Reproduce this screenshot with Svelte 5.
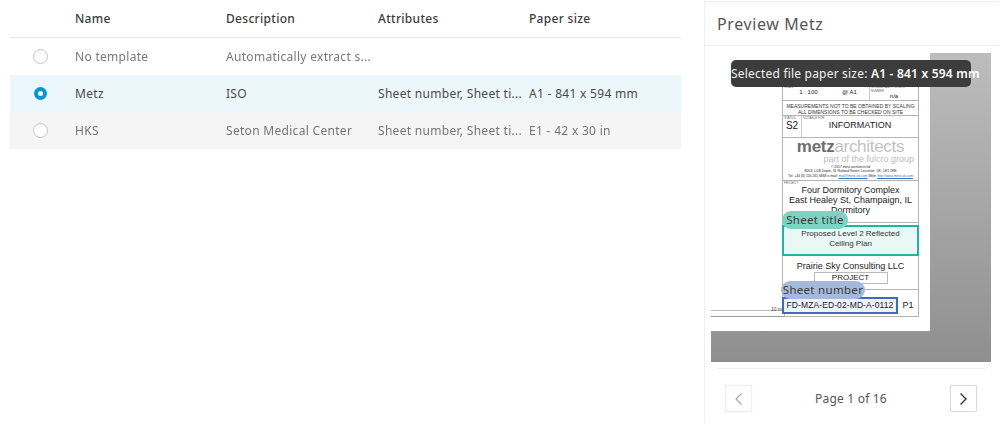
<script>
	const columns = ['Name', 'Description', 'Attributes', 'Paper size'];
	const templates = [
		{ name: 'No template', description: 'Automatically extract s...', attributes: '', paper: '', state: 'disabled' },
		{ name: 'Metz', description: 'ISO', attributes: 'Sheet number, Sheet ti...', paper: 'A1 - 841 x 594 mm', state: 'selected' },
		{ name: 'HKS', description: 'Seton Medical Center', attributes: 'Sheet number, Sheet ti...', paper: 'E1 - 42 x 30 in', state: 'disabled alt' }
	];
</script>

<div class="page">
	<section class="table">
		<div class="row head">
			<span class="radio-cell"></span>
			{#each columns as col}
				<span class="cell">{col}</span>
			{/each}
		</div>
		{#each templates as t}
			<div class="row {t.state}">
				<span class="radio-cell"><span class="radio"></span></span>
				<span class="cell">{t.name}</span>
				<span class="cell">{t.description}</span>
				<span class="cell">{t.attributes}</span>
				<span class="cell">{t.paper}</span>
			</div>
		{/each}
	</section>

	<aside class="preview">
		<h2>Preview Metz</h2>
		<div class="stage">
			<div class="sheet">
				<div class="scale-bar"><span>10 m</span></div>
				<div class="block">
					<div class="b-row revs">
						<span>A</span><span>Rev</span><span class="wide">Initial Issue<br />Comment</span><span>Drn<br />Drawn</span><span>Chk<br />Check</span>
					</div>
					<div class="b-row scale">
						<div class="scale-main"><small>SCALE</small><p><span>1 : 100</span><span>@ A1</span></p></div>
						<div class="scale-side"><small>CONSULTANT PROJECT NUMBER</small><p>n/a</p></div>
					</div>
					<div class="b-row warning">MEASUREMENTS NOT TO BE OBTAINED BY SCALING<br />ALL DIMENSIONS TO BE CHECKED ON SITE</div>
					<div class="b-row status">
						<div class="status-code"><small>STATUS</small><p>S2</p></div>
						<div class="status-text"><small>SUITABLE FOR</small><p>INFORMATION</p></div>
					</div>
					<div class="b-row logo">
						<div class="logo-word"><b>metz</b><i>architects</i></div>
						<div class="logo-sub">part of the fulcro group</div>
						<div class="logo-fine">© 2017 metz architects ltd<br />B203, LCB Depot, 31 Rutland Street, Leicester, UK, LE1 1RE<br />Tel: +44 (0) 116 261 6868 e-mail: <u>mail@metz.uk.com</u> Web: <u>http://www.metz.uk.com</u></div>
					</div>
					<div class="b-row project">
						<small>PROJECT</small>
						Four Dormitory Complex<br />East Healey St, Champaign, IL<br />Dormitory
					</div>
					<div class="b-row title-row">
						<div class="title-box">Proposed Level 2 Reflected<br />Ceiling Plan</div>
					</div>
					<div class="b-row client">
						Prairie Sky Consulting LLC
						<div class="tag">PROJECT</div>
					</div>
					<div class="b-row number">
						<div class="number-box">FD-MZA-ED-02-MD-A-0112</div>
						<div class="rev-code">P1</div>
					</div>
				</div>
			</div>
			<div class="tooltip">Selected file paper size: <strong>A1 - 841 x 594 mm</strong></div>
			<span class="pill pill-title">Sheet title</span>
			<span class="pill pill-number">Sheet number</span>
		</div>
		<div class="pager">
			<button class="nav" disabled aria-label="Previous page">
				<svg width="16" height="16" viewBox="0 0 16 16" fill="none"><path d="M10.5 2.5 5 8l5.5 5.5" stroke="currentColor" stroke-width="1.2" /></svg>
			</button>
			<span>Page 1 of 16</span>
			<button class="nav" aria-label="Next page">
				<svg width="16" height="16" viewBox="0 0 16 16" fill="none"><path d="M5.5 2.5 11 8l-5.5 5.5" stroke="currentColor" stroke-width="1.4" /></svg>
			</button>
		</div>
	</aside>
</div>

<style>
	:global(body) {
		background: #fff;
		font-family: 'Noto Sans', 'Open Sans', sans-serif;
		color: #3c3c3c;
	}

	.page {
		display: flex;
		height: 423px;
		overflow: hidden;
	}

	.table {
		width: 671px;
		margin-left: 10px;
		flex: none;
	}

	.row {
		display: grid;
		grid-template-columns: 65px 151px 152px 151px 152px;
		align-items: center;
		height: 37px;
		font-size: 12px;
		letter-spacing: 0.3px;
		color: #4a4a4a;
	}

	.head {
		height: 38px;
		padding-bottom: 1px;
		box-sizing: border-box;
		border-bottom: 1px solid #e6e6e6;
		font-weight: 500;
		color: #3c3c3c;
	}

	.row.selected {
		background: #ecf7fc;
	}

	.row.alt {
		background: #f5f5f5;
	}

	.row.disabled .cell {
		filter: blur(0.7px);
		opacity: 0.75;
	}

	.radio-cell {
		display: flex;
		justify-content: center;
		padding-left: 0;
		width: 60px;
	}

	.radio {
		width: 13px;
		height: 13px;
		border-radius: 50%;
		border: 1px solid #c4c4c4;
		background: #fff;
	}

	.selected .radio {
		box-sizing: content-box;
		width: 5px;
		height: 5px;
		border: 4px solid #0696d7;
	}

	.preview {
		width: 295px;
		margin-left: 23px;
		flex: none;
		border-left: 1px solid #eeeeee;
		border-top: 1px solid #eeeeee;
		margin-top: 1px;
		box-sizing: border-box;
		display: flex;
		flex-direction: column;
	}

	h2 {
		margin: 0;
		height: 44px;
		padding-left: 12px;
		box-sizing: border-box;
		display: flex;
		align-items: center;
		border-bottom: 1px solid #eeeeee;
		font-size: 16px;
		font-weight: 400;
		letter-spacing: 0.6px;
		color: #555;
	}

	.stage {
		position: relative;
		margin: 7px 0 0 6px;
		width: 280px;
		height: 309px;
		background: linear-gradient(180deg, #bdbdbd 0%, #8f8f8f 100%);
		flex: none;
	}

	.sheet {
		position: relative;
		width: 219px;
		height: 278px;
		background: #fff;
		display: flex;
		justify-content: flex-end;
		align-items: flex-end;
		padding: 0 11px 14px 0;
		box-sizing: border-box;
		font-family: 'Liberation Sans', Arial, sans-serif;
		color: #222;
	}

	.scale-bar {
		position: absolute;
		left: 0;
		bottom: 14px;
		width: 73px;
		height: 5px;
		border: 1px solid #bbb;
		border-left: 0;
		border-bottom-color: #999;
		background: #fff;
	}

	.scale-bar span {
		position: absolute;
		right: 2px;
		bottom: 4px;
		font-size: 5px;
		color: #444;
	}

	.block {
		width: 135px;
		border: 1px solid #b5b5b5;
		text-align: center;
		font-size: 9px;
		line-height: 10px;
		margin-bottom: 0;
	}

	.b-row {
		border-bottom: 1px solid #b5b5b5;
		position: relative;
	}

	.b-row:last-child {
		border-bottom: 0;
	}

	small {
		display: block;
		text-align: left;
		font-size: 3px;
		line-height: 4px;
		color: #666;
		padding-left: 1px;
	}

	.revs {
		display: grid;
		grid-template-columns: 7px 10px 1fr 12px 13px;
		font-size: 3.5px;
		line-height: 4.5px;
		height: 9px;
		color: #555;
	}

	.revs span {
		border-right: 1px solid #ccc;
	}

	.revs span:last-child {
		border-right: 0;
	}

	.revs span:nth-child(1),
	.revs span:nth-child(2) {
		border-bottom: 0;
	}

	.scale {
		display: flex;
		height: 15px;
	}

	.scale-main {
		width: 86px;
		border-right: 1px solid #ccc;
	}

	.scale-main p {
		margin: 0;
		display: flex;
		justify-content: space-around;
		font-size: 6px;
		line-height: 7px;
		padding-left: 4px;
	}

	.scale-side {
		flex: 1;
	}

	.scale-side p {
		margin: 0;
		font-size: 6px;
		line-height: 7px;
	}

	.warning {
		font-size: 5px;
		line-height: 6px;
		height: 15px;
		padding-top: 2px;
		box-sizing: border-box;
		color: #333;
	}

	.status {
		display: flex;
		height: 21px;
	}

	.status-code {
		width: 18px;
		border-right: 1px solid #ccc;
	}

	.status-code p,
	.status-text p {
		margin: 0;
	}

	.status-code p {
		font-size: 10px;
		line-height: 11px;
	}

	.status-text {
		flex: 1;
	}

	.status-text p {
		font-size: 9px;
		line-height: 11px;
	}

	.logo {
		height: 42px;
		overflow: hidden;
	}

	.logo-word {
		font-size: 17px;
		line-height: 16px;
		letter-spacing: -0.3px;
		white-space: nowrap;
		padding-top: 1px;
	}

	.logo-word b {
		color: #6e6e6e;
	}

	.logo-word i {
		font-style: normal;
		color: #c2c2c2;
	}

	.logo-sub {
		text-align: right;
		padding-right: 4px;
		font-size: 9px;
		line-height: 8px;
		color: #bdbdbd;
	}

	.logo-fine {
		font-size: 3.4px;
		line-height: 4.4px;
		margin-top: 2px;
		white-space: nowrap;
	}

	.logo-fine u {
		color: #3a6fc0;
	}

	.project {
		height: 41px;
		font-size: 9px;
		line-height: 10px;
	}

	.title-row {
		height: 35px;
		padding-top: 2px;
		box-sizing: border-box;
		border-bottom: 0;
	}

	.title-box {
		margin: 0 -1px 0 -1px;
		height: 31px;
		box-sizing: border-box;
		border: 2px solid #1fb5a0;
		background: #e9f7f5;
		font-size: 8px;
		line-height: 10px;
		padding-top: 2px;
		color: #333;
	}

	.client {
		height: 32px;
		border-top: 0;
		font-size: 9px;
		line-height: 11px;
		padding-top: 3px;
		box-sizing: border-box;
	}

	.tag {
		display: block;
		width: 72px;
		margin: 0 auto;
		border: 1px solid #bbb;
		font-size: 8px;
		line-height: 10px;
		text-align: center;
	}

	.number {
		display: flex;
		height: 26px;
		padding-top: 7px;
		box-sizing: border-box;
	}

	.number-box {
		width: 116px;
		margin-left: -1px;
		height: 17px;
		box-sizing: border-box;
		border: 2px solid #3a6fb5;
		background: #eef2f9;
		font-size: 8.5px;
		line-height: 13px;
		white-space: nowrap;
		letter-spacing: 0.1px;
	}

	.rev-code {
		flex: 1;
		font-size: 9px;
		line-height: 17px;
		font-weight: 400;
	}

	.tooltip {
		position: absolute;
		left: 20px;
		top: 7px;
		width: 240px;
		height: 27px;
		border-radius: 5px;
		background: #3c3c3c;
		color: #f2f2f2;
		font-family: 'Noto Sans', sans-serif;
		font-size: 12px;
		line-height: 27px;
		letter-spacing: 0.2px;
		text-align: center;
		white-space: nowrap;
	}

	.tooltip strong {
		font-weight: 600;
		color: #fff;
	}

	.pill {
		position: absolute;
		height: 18px;
		line-height: 18px;
		border-radius: 9px;
		font-size: 11.5px;
		letter-spacing: 0.3px;
		color: #3c3c3c;
		font-family: 'Noto Sans', sans-serif;
		white-space: nowrap;
		text-align: center;
	}

	.pill-title {
		left: 71px;
		top: 158px;
		width: 66px;
		background: #7dd2c2;
	}

	.pill-number {
		left: 70px;
		top: 228px;
		width: 84px;
		background: #a3b9dd;
	}

	.pager {
		margin: 6px 14px 0 12px;
		border-top: 1px solid #eeeeee;
		padding: 16px 8px 0;
		display: flex;
		justify-content: space-between;
		align-items: center;
		font-size: 12px;
		letter-spacing: 0.2px;
		color: #555;
	}

	.nav {
		width: 27px;
		height: 27px;
		padding: 0;
		background: #fff;
		border: 1px solid #d9d9d9;
		box-shadow: 0 0 1px #ddd;
		border-radius: 2px;
		color: #333;
		display: flex;
		align-items: center;
		justify-content: center;
	}

	.nav:disabled {
		border-color: #eeeeee;
		color: #aaa;
	}
</style>
